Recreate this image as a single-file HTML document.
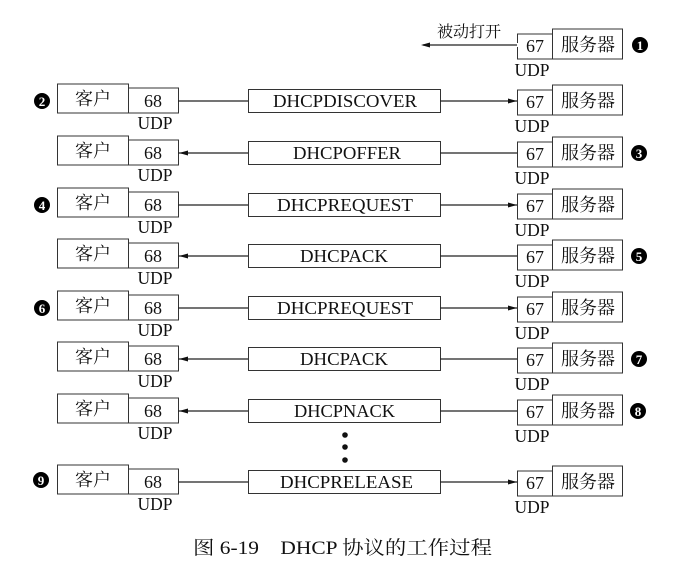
<!DOCTYPE html>
<html><head><meta charset="utf-8"><style>
html,body{margin:0;padding:0;background:#fff;}
svg{display:block;}
text{font-family:"Liberation Serif","Noto Serif CJK SC",serif;fill:#111;}
.c{text-anchor:middle;}
</style></head><body>
<svg width="691" height="565" viewBox="0 0 691 565" xmlns="http://www.w3.org/2000/svg">
<defs>
<g id="srv">
 <line x1="440" y1="0" x2="517" y2="0" stroke="#222" stroke-width="1.3"/>
 <rect x="517.5" y="-11" width="35" height="25" fill="none" stroke="#333" stroke-width="1"/>
 <text x="535" y="7" class="c" font-size="18">67</text>
 <rect x="552.5" y="-16" width="70" height="30" fill="#fff" stroke="#333" stroke-width="1"/>
 <text x="588" y="6" class="c" font-size="18">服务器</text>
 <text x="532" y="31" class="c" font-size="17.5">UDP</text>
</g>
<g id="cli">
 <rect x="57.5" y="-17" width="71" height="29" fill="none" stroke="#333" stroke-width="1"/>
 <text x="93" y="4" class="c" font-size="18">客户</text>
 <rect x="128.5" y="-13" width="50" height="25" fill="none" stroke="#333" stroke-width="1"/>
 <text x="153" y="6" class="c" font-size="18">68</text>
 <text x="155" y="28" class="c" font-size="17.5">UDP</text>
 <line x1="178" y1="0" x2="248" y2="0" stroke="#222" stroke-width="1.3"/>
 <rect x="248.5" y="-11.5" width="192" height="23" fill="#fff" stroke="#333" stroke-width="1"/>
</g>
<polygon id="ar" points="517,0 508,-2.5 508,2.5" fill="#111"/>
<polygon id="al" points="179,0 188,-2.5 188,2.5" fill="#111"/>
</defs>

<g transform="translate(0,45)">
 <use href="#srv"/>
 <rect x="420" y="-2" width="98" height="4" fill="#fff"/>
 <line x1="423" y1="0" x2="517" y2="0" stroke="#222" stroke-width="1.3"/>
 <polygon points="421,0 430,-2.5 430,2.5" fill="#111"/>
 <text x="437" y="-8" font-size="16">被动打开</text>
 <circle cx="640" cy="0" r="8"/><text x="640" y="5" class="c" font-size="13" font-weight="bold" style="fill:#fff">1</text>
</g>

<g transform="translate(0,101)"><use href="#cli"/><use href="#srv"/><use href="#ar"/>
 <text x="273" y="6" font-size="18" textLength="144" lengthAdjust="spacingAndGlyphs">DHCPDISCOVER</text>
 <circle cx="42" cy="0" r="8"/><text x="42" y="5" class="c" font-size="13" font-weight="bold" style="fill:#fff">2</text></g>

<g transform="translate(0,153)"><use href="#cli"/><use href="#srv"/><use href="#al"/>
 <text x="293" y="6" font-size="18" textLength="108" lengthAdjust="spacingAndGlyphs">DHCPOFFER</text>
 <circle cx="639" cy="0" r="8"/><text x="639" y="5" class="c" font-size="13" font-weight="bold" style="fill:#fff">3</text></g>

<g transform="translate(0,205)"><use href="#cli"/><use href="#srv"/><use href="#ar"/>
 <text x="277" y="6" font-size="18" textLength="136" lengthAdjust="spacingAndGlyphs">DHCPREQUEST</text>
 <circle cx="42" cy="0" r="8"/><text x="42" y="5" class="c" font-size="13" font-weight="bold" style="fill:#fff">4</text></g>

<g transform="translate(0,256)"><use href="#cli"/><use href="#srv"/><use href="#al"/>
 <text x="300" y="6" font-size="18" textLength="88" lengthAdjust="spacingAndGlyphs">DHCPACK</text>
 <circle cx="639" cy="0" r="8"/><text x="639" y="5" class="c" font-size="13" font-weight="bold" style="fill:#fff">5</text></g>

<g transform="translate(0,308)"><use href="#cli"/><use href="#srv"/><use href="#ar"/>
 <text x="277" y="6" font-size="18" textLength="136" lengthAdjust="spacingAndGlyphs">DHCPREQUEST</text>
 <circle cx="42" cy="0" r="8"/><text x="42" y="5" class="c" font-size="13" font-weight="bold" style="fill:#fff">6</text></g>

<g transform="translate(0,359)"><use href="#cli"/><use href="#srv"/><use href="#al"/>
 <text x="300" y="6" font-size="18" textLength="88" lengthAdjust="spacingAndGlyphs">DHCPACK</text>
 <circle cx="639" cy="0" r="8"/><text x="639" y="5" class="c" font-size="13" font-weight="bold" style="fill:#fff">7</text></g>

<g transform="translate(0,411)"><use href="#cli"/><use href="#srv"/><use href="#al"/>
 <text x="294" y="6" font-size="18" textLength="101" lengthAdjust="spacingAndGlyphs">DHCPNACK</text>
 <circle cx="638" cy="0" r="8"/><text x="638" y="5" class="c" font-size="13" font-weight="bold" style="fill:#fff">8</text></g>

<circle cx="345" cy="435" r="2.8" fill="#111"/>
<circle cx="345" cy="447" r="2.8" fill="#111"/>
<circle cx="345" cy="460" r="2.8" fill="#111"/>

<g transform="translate(0,482)"><use href="#cli"/><use href="#srv"/><use href="#ar"/>
 <text x="280" y="6" font-size="18" textLength="133" lengthAdjust="spacingAndGlyphs">DHCPRELEASE</text>
 <circle cx="41" cy="-2" r="8"/><text x="41" y="3" class="c" font-size="13" font-weight="bold" style="fill:#fff">9</text></g>

<text x="193" y="554" font-size="19" textLength="299" lengthAdjust="spacingAndGlyphs">图 6-19　DHCP 协议的工作过程</text>
</svg>
</body></html>
